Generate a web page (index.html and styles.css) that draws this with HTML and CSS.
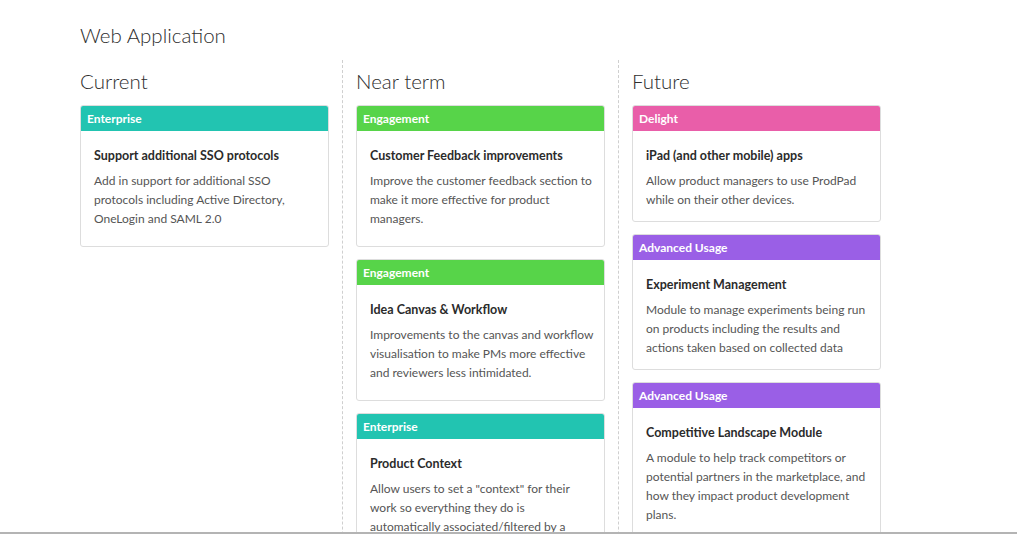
FILE: index.html
```html
<!DOCTYPE html>
<html lang="en">
<head>
<meta charset="UTF-8" />
<meta name="viewport" content="width=device-width, initial-scale=1.0"/>
<title>Roadmap - Web Application</title>
<link rel="stylesheet" href="styles.css">
</head>
<body>

<div class="roadmap">
    <h1 class="roadmap-title">Web Application</h1>

    <div class="lanes">
        <!-- 現在 -->
        <div class="lane">
            <h2 class="lane-title">Current</h2>
            <div class="card">
                <div class="card-tag tag-enterprise">Enterprise</div>
                <div class="card-body">
                    <h3>Support additional SSO protocols</h3>
                    <p>Add in support for additional SSO<br>protocols including Active Directory,<br>OneLogin and SAML 2.0</p>
                </div>
            </div>
        </div>

        <!-- 近いうち -->
        <div class="lane">
            <h2 class="lane-title">Near term</h2>
            <div class="card">
                <div class="card-tag tag-engagement">Engagement</div>
                <div class="card-body">
                    <h3>Customer Feedback improvements</h3>
                    <p>Improve the customer feedback section to<br>make it more effective for product<br>managers.</p>
                </div>
            </div>
            <div class="card">
                <div class="card-tag tag-engagement">Engagement</div>
                <div class="card-body">
                    <h3>Idea Canvas &amp; Workflow</h3>
                    <p>Improvements to the canvas and workflow<br>visualisation to make PMs more effective<br>and reviewers less intimidated.</p>
                </div>
            </div>
            <div class="card">
                <div class="card-tag tag-enterprise">Enterprise</div>
                <div class="card-body">
                    <h3>Product Context</h3>
                    <p>Allow users to set a "context" for their<br>work so everything they do is<br>automatically associated/filtered by a<br>product or product line.</p>
                </div>
            </div>
        </div>

        <!-- 将来 -->
        <div class="lane lane-future">
            <h2 class="lane-title">Future</h2>
            <div class="card">
                <div class="card-tag tag-delight">Delight</div>
                <div class="card-body">
                    <h3>iPad (and other mobile) apps</h3>
                    <p>Allow product managers to use ProdPad<br>while on their other devices.</p>
                </div>
            </div>
            <div class="card">
                <div class="card-tag tag-advanced">Advanced Usage</div>
                <div class="card-body">
                    <h3>Experiment Management</h3>
                    <p>Module to manage experiments being run<br>on products including the results and<br>actions taken based on collected data</p>
                </div>
            </div>
            <div class="card">
                <div class="card-tag tag-advanced">Advanced Usage</div>
                <div class="card-body">
                    <h3>Competitive Landscape Module</h3>
                    <p>A module to help track competitors or<br>potential partners in the marketplace, and<br>how they impact product development<br>plans.</p>
                </div>
            </div>
        </div>
    </div>
</div>

<div class="window-edge"></div>

</body>
</html>
```

FILE: styles.css
```css
body {
    font-family: Lato, "Liberation Sans", sans-serif;
    background: #ffffff;
    color: #333333;
    margin: 0;
    padding: 0;
    overflow: hidden;
}

.roadmap {
    padding: 0 80px;
}

.roadmap-title {
    margin: 0;
    padding-top: 22px;
    font-size: 20.5px;
    font-weight: 300;
    line-height: 26px;
    height: 38px;
    color: #2e2e2e;
}

.lanes {
    display: grid;
    grid-template-columns: 263px 276px 262px;
}

.lane {
    border-right: 1px dashed #cfcfcf;
    padding-right: 13px;
    min-height: 600px;
}

.lane + .lane {
    padding-left: 13px;
}

.lane-future {
    border-right: none;
    padding-right: 0;
}

.lane-title {
    margin: 0;
    font-size: 20.5px;
    font-weight: 300;
    line-height: 26px;
    padding: 8px 0 11px;
    color: #2e2e2e;
}

.card {
    border: 1px solid #dddddd;
    border-radius: 3px;
    overflow: hidden;
    margin-bottom: 12px;
}

.card-tag {
    height: 25px;
    line-height: 25px;
    padding: 0 6px;
    color: #ffffff;
    font-size: 12px;
    font-weight: 700;
}

.tag-enterprise { background: #22c4b1; }
.tag-engagement { background: #57d449; }
.tag-delight { background: #e95ea9; }
.tag-advanced { background: #9a5fe6; }

.card-body {
    padding: 15px 13px 18px;
}

.lane-future .card-body {
    padding-bottom: 12px;
}

.card-body h3 {
    margin: 0;
    font-size: 12.5px;
    font-weight: 700;
    line-height: 19px;
    color: #2b2b2b;
}

.card-body p {
    margin: 6px 0 0;
    font-size: 12px;
    line-height: 19px;
    color: #555555;
    white-space: nowrap;
}

/* 画面下端の線 */
.window-edge {
    position: fixed;
    left: 0;
    right: 0;
    bottom: 0;
    height: 2px;
    background: #b4b4b4;
}
```
